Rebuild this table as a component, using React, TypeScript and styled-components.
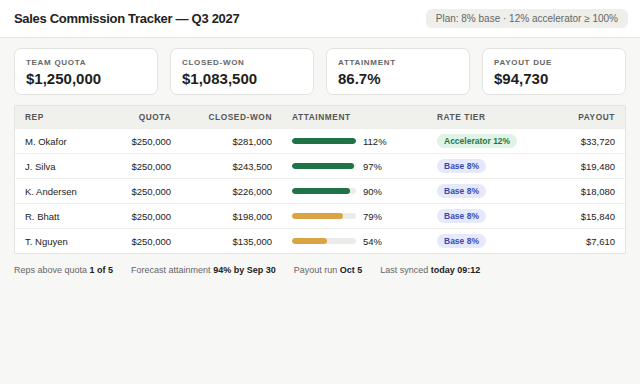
import React from 'react';
import styled, { createGlobalStyle } from 'styled-components';

const GlobalStyle = createGlobalStyle`
    html, body {
        margin: 0;
        padding: 0;
        background: #f7f7f5;
        font-family: "Liberation Sans", Arial, sans-serif;
        color: #222;
    }
`;

interface Rep {
    name: string;
    quota: string;
    closed: string;
    pct: number;
    tier: string;
    accelerator: boolean;
    payout: string;
}

const reps: Rep[] = [
    { name: 'M. Okafor', quota: '$250,000', closed: '$281,000', pct: 112, tier: 'Accelerator 12%', accelerator: true, payout: '$33,720' },
    { name: 'J. Silva', quota: '$250,000', closed: '$243,500', pct: 97, tier: 'Base 8%', accelerator: false, payout: '$19,480' },
    { name: 'K. Andersen', quota: '$250,000', closed: '$226,000', pct: 90, tier: 'Base 8%', accelerator: false, payout: '$18,080' },
    { name: 'R. Bhatt', quota: '$250,000', closed: '$198,000', pct: 79, tier: 'Base 8%', accelerator: false, payout: '$15,840' },
    { name: 'T. Nguyen', quota: '$250,000', closed: '$135,000', pct: 54, tier: 'Base 8%', accelerator: false, payout: '$7,610' },
];

const stats = [
    { label: 'Team quota', value: '$1,250,000' },
    { label: 'Closed-won', value: '$1,083,500' },
    { label: 'Attainment', value: '86.7%' },
    { label: 'Payout due', value: '$94,730' },
];

const App = () => {
    return (
        <Page>
            <GlobalStyle />
            <Header>
                <Title>Sales Commission Tracker — Q3 2027</Title>
                <PlanPill>Plan: 8% base · 12% accelerator ≥ 100%</PlanPill>
            </Header>
            <Body>
                <StatGrid>
                    {stats.map((s) => (
                        <StatCard key={s.label}>
                            <StatLabel>{s.label}</StatLabel>
                            <StatValue>{s.value}</StatValue>
                        </StatCard>
                    ))}
                </StatGrid>
                <Table>
                    <HeadRow>
                        <HeadCell>Rep</HeadCell>
                        <HeadCell $right>Quota</HeadCell>
                        <HeadCell $right>Closed-won</HeadCell>
                        <HeadCell>Attainment</HeadCell>
                        <HeadCell>Rate tier</HeadCell>
                        <HeadCell $right>Payout</HeadCell>
                    </HeadRow>
                    {reps.map((r) => (
                        <Row key={r.name}>
                            <Cell>{r.name}</Cell>
                            <Cell $right>{r.quota}</Cell>
                            <Cell $right>{r.closed}</Cell>
                            <Cell>
                                <BarTrack>
                                    <BarFill $good={r.pct >= 90} style={{ width: `${Math.min(r.pct, 100)}%` }} />
                                </BarTrack>
                                <Pct>{r.pct}%</Pct>
                            </Cell>
                            <Cell>
                                <TierBadge $accelerator={r.accelerator}>{r.tier}</TierBadge>
                            </Cell>
                            <Cell $right>{r.payout}</Cell>
                        </Row>
                    ))}
                </Table>
                <Footer>
                    <FooterItem>
                        Reps above quota <b>1 of 5</b>
                    </FooterItem>
                    <FooterItem>
                        Forecast attainment <b>94% by Sep 30</b>
                    </FooterItem>
                    <FooterItem>
                        Payout run <b>Oct 5</b>
                    </FooterItem>
                    <FooterItem>
                        Last synced <b>today 09:12</b>
                    </FooterItem>
                </Footer>
            </Body>
        </Page>
    );
};

export default App;

const Page = styled.div`
    width: 640px;
    height: 384px;
    background: #f7f7f5;
    overflow: hidden;
`;

const Header = styled.header`
    display: flex;
    align-items: center;
    justify-content: space-between;
    height: 37px;
    padding: 0 12px 0 14px;
    background: #fff;
    border-bottom: 1px solid #e4e4e0;
`;

const Title = styled.h1`
    margin: 0;
    font-size: 13px;
    font-weight: 700;
    letter-spacing: -0.3px;
    color: #222;
`;

const PlanPill = styled.span`
    padding: 4px 10px;
    background: #eeeeea;
    border-radius: 6px;
    font-size: 10px;
    color: #666;
`;

const Body = styled.main`
    padding: 10px 14px 0;
`;

const StatGrid = styled.div`
    display: grid;
    grid-template-columns: repeat(4, 1fr);
    gap: 12px;
`;

const StatCard = styled.div`
    height: 47px;
    box-sizing: border-box;
    padding: 9px 11px;
    background: #fff;
    border: 1px solid #e2e2de;
    border-radius: 7px;
`;

const StatLabel = styled.div`
    font-size: 8px;
    font-weight: 700;
    letter-spacing: 0.7px;
    text-transform: uppercase;
    color: #666;
`;

const StatValue = styled.div`
    margin-top: 3px;
    font-size: 15px;
    font-weight: 700;
    color: #1e1e1e;
`;

const Table = styled.div`
    margin-top: 10px;
    background: #fff;
    border: 1px solid #e4e4e0;
    border-radius: 2px;
`;

const columns = '86px 80px 101px 145px 110px 1fr';

const HeadRow = styled.div`
    display: grid;
    grid-template-columns: ${columns};
    height: 22px;
    align-items: center;
    background: #f0f0ed;
`;

const HeadCell = styled.div<{ $right?: boolean }>`
    padding: 0 10px;
    text-align: ${({ $right }) => ($right ? 'right' : 'left')};
    font-size: 8.3px;
    font-weight: 700;
    letter-spacing: 0.6px;
    text-transform: uppercase;
    color: #555;
`;

const Row = styled.div`
    display: grid;
    grid-template-columns: ${columns};
    height: 24px;
    align-items: center;
    border-top: 1px solid #efefec;
`;

const Cell = styled.div<{ $right?: boolean }>`
    display: flex;
    align-items: center;
    justify-content: ${({ $right }) => ($right ? 'flex-end' : 'flex-start')};
    padding: 0 10px;
    font-size: 9.5px;
    color: #222;
`;

const BarTrack = styled.div`
    width: 64px;
    height: 6px;
    border-radius: 3px;
    background: #ebebe8;
    overflow: hidden;
`;

const BarFill = styled.div<{ $good: boolean }>`
    height: 100%;
    border-radius: 3px;
    background: ${({ $good }) => ($good ? '#1f7346' : '#d9a441')};
`;

const Pct = styled.span`
    margin-left: 7px;
`;

const TierBadge = styled.span<{ $accelerator: boolean }>`
    padding: 2px 7px;
    border-radius: 7px;
    font-size: 8.5px;
    font-weight: 700;
    background: ${({ $accelerator }) => ($accelerator ? '#dff3e6' : '#e5e9fb')};
    color: ${({ $accelerator }) => ($accelerator ? '#1f7a47' : '#3a4bb0')};
`;

const Footer = styled.footer`
    display: flex;
    gap: 18px;
    padding: 11px 0 0;
    font-size: 9px;
    color: #666;

    b {
        color: #222;
    }
`;

const FooterItem = styled.span``;
